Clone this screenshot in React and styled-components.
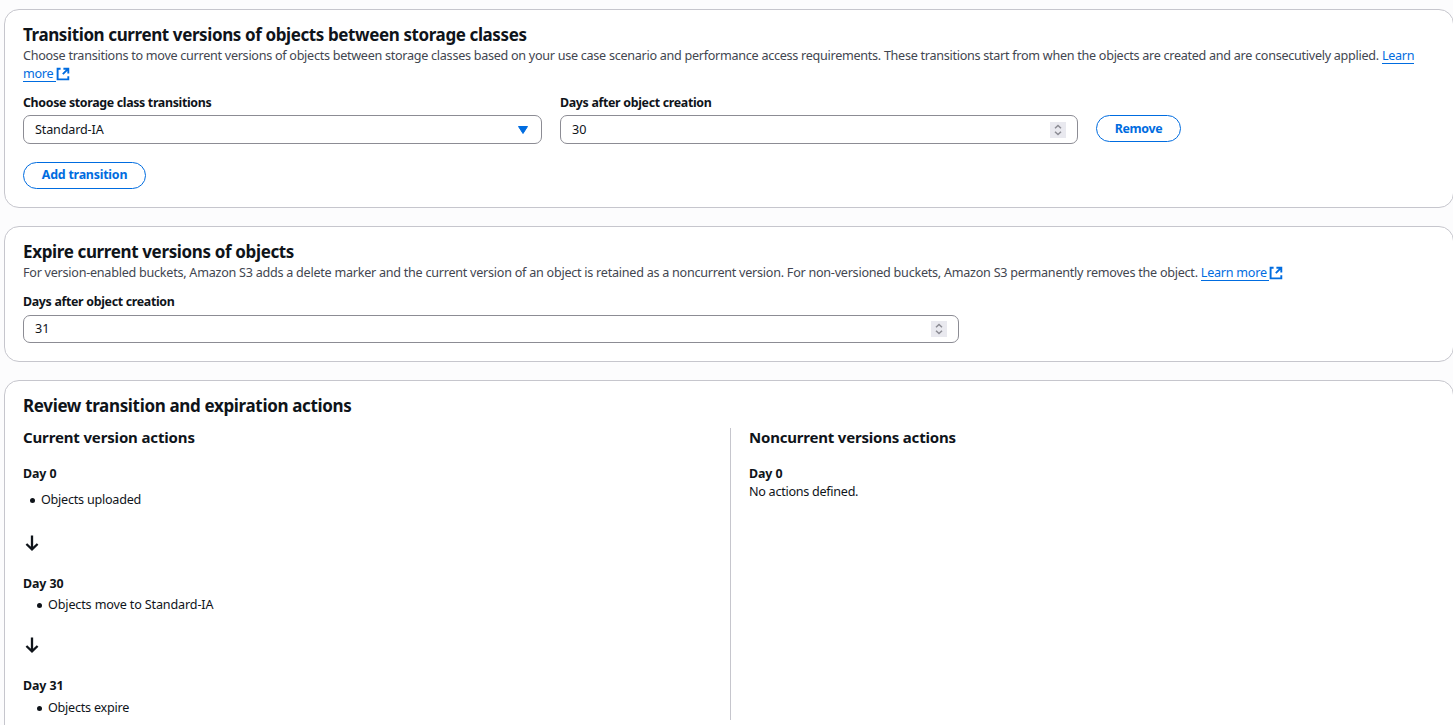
import React from "react";
import styled, { createGlobalStyle, css } from "styled-components";

const Global = createGlobalStyle`
  *, *::before, *::after { box-sizing: border-box; }
  html, body { margin: 0; background: #fcfcfd; overflow: hidden; }
  body {
    font-family: "Noto Sans", "Open Sans", sans-serif;
    font-size: 12.6px;
    line-height: 18px;
    color: #0f141a;
  }
`;

const tracking = css`
  letter-spacing: ${(p) => p.$track || 0}px;
  white-space: nowrap;
`;

const Page = styled.main`
  display: flex;
  flex-direction: column;
  gap: 18px;
  width: 1450px;
  height: 725px;
  margin-left: 4px;
  padding-top: 9px;
  overflow: hidden;
`;

const Card = styled.section`
  flex: none;
  height: ${(p) => p.$height}px;
  padding: 14px 18px 0;
  background: #fff;
  border: 1px solid #c6c6cd;
  border-radius: 15px;
`;

const Title = styled.h2`
  margin: 0;
  font-size: 17px;
  line-height: 22px;
  font-weight: 700;
  ${tracking}
`;

const Description = styled.p`
  margin: 1px 0 0;
  color: #424650;
  ${tracking}
`;

const Link = styled.a`
  color: #006ce0;
  white-space: pre;
`;

const LinkText = styled.span`
  box-shadow: inset 0 -1px 0 #006ce0;
  padding-right: ${(p) => p.$pad || 0}px;
`;

const ExternalSvg = styled.svg`
  width: 14px;
  height: 14px;
  vertical-align: -3px;
`;

const FieldRow = styled.div`
  display: flex;
  align-items: flex-start;
  gap: 18px;
  margin-top: 11px;
`;

const Field = styled.div`
  width: ${(p) => p.$width}px;
`;

const Label = styled.div`
  margin-bottom: ${(p) => p.$gap || 3}px;
  font-size: 12.4px;
  font-weight: 700;
  ${tracking}
`;

const Control = styled.div`
  display: flex;
  align-items: center;
  justify-content: space-between;
  height: ${(p) => p.$height || 29}px;
  padding: 0 11px;
  border: 1px solid #8c8c94;
  border-radius: 7px;
  background: #fff;
  ${tracking}
`;

const CaretSvg = styled.svg`
  width: 10px;
  height: 8px;
  margin-right: 2px;
`;

const Spinner = styled.span`
  display: flex;
  align-items: center;
  justify-content: center;
  width: 16px;
  height: 16px;
  background: #e9e9ef;
`;

const Button = styled.button`
  display: flex;
  align-items: center;
  justify-content: center;
  width: ${(p) => p.$width}px;
  height: 27px;
  margin: ${(p) => p.$top}px 0 0;
  padding: 0 0 ${(p) => p.$lift || 0}px;
  font: inherit;
  font-size: 12.4px;
  font-weight: 700;
  color: #006ce0;
  background: #fff;
  border: 1px solid #006ce0;
  border-radius: 14px;
  ${tracking}
`;

const Columns = styled.div`
  display: flex;
  height: 292px;
  margin-top: 11px;
`;

const Column = styled.div`
  width: ${(p) => (p.$divided ? 708 : 700)}px;
  padding-left: ${(p) => (p.$divided ? 0 : 18)}px;
  border-right: ${(p) => (p.$divided ? "1px solid #c6c6cd" : "0")};
`;

const Subtitle = styled.h3`
  margin: 0 0 18px;
  font-size: 15px;
  line-height: 19px;
  font-weight: 700;
  ${tracking}
`;

const Day = styled.div`
  font-size: 12.4px;
  font-weight: 700;
  ${tracking}
`;

const Text = styled.div`
  ${tracking}
`;

const Action = styled.div`
  display: flex;
  align-items: center;
  gap: 6px;
  height: 18px;
  margin-top: ${(p) => p.$top}px;
  padding-left: ${(p) => p.$indent}px;
  ${tracking}

  &::before {
    content: "";
    width: 5px;
    height: 5px;
    margin-top: 1px;
    border-radius: 50%;
    background: #0f141a;
  }
`;

const ArrowSvg = styled.svg`
  display: block;
  width: 18px;
  height: 18px;
  margin: ${(p) => p.$margin};
`;

function External() {
  return (
    <ExternalSvg viewBox="0 0 14 14" fill="none" stroke="#006ce0" strokeWidth="1.9">
      <path d="M4.6 1.7H1.6v10.7h10.7V9.2" />
      <path d="M7.4 1.7h4.9v4.8M12.3 1.7 6.8 7.2" />
    </ExternalSvg>
  );
}

function Stepper() {
  return (
    <Spinner>
      <svg width="16" height="16" viewBox="0 0 16 16" fill="none" stroke="#8c8c94" strokeWidth="1.5">
        <path d="M5 6.3 8 3.5l3 2.8M5 9.7l3 2.8 3-2.8" />
      </svg>
    </Spinner>
  );
}

function Arrow({ margin }) {
  return (
    <ArrowSvg $margin={margin} viewBox="0 0 18 18" fill="none" stroke="#0f141a" strokeWidth="2.3">
      <path d="M9 .5v14M3.4 9 9 14.4 14.6 9" />
    </ArrowSvg>
  );
}

export default function App() {
  return (
    <>
      <Global />
      <Page>
        <Card $height={199}>
          <Title $track={-0.394}>Transition current versions of objects between storage classes</Title>
          <Description $track={-0.28}>
            Choose transitions to move current versions of objects between storage classes based on your use case
            scenario and performance access requirements. These transitions start from when the objects are created and
            are consecutively applied.{" "}
            <Link>
              <LinkText>Learn</LinkText>
              <br />
              <LinkText $pad={3}>more</LinkText>
              <External />
            </Link>
          </Description>
          <FieldRow>
            <Field $width={519}>
              <Label $track={-0.34}>Choose storage class transitions</Label>
              <Control $track={-0.15}>
                Standard-IA
                <CaretSvg viewBox="0 0 10 8">
                  <path d="M.5.5h9L5 7.5z" fill="#006ce0" stroke="#006ce0" strokeLinejoin="round" />
                </CaretSvg>
              </Control>
            </Field>
            <Field $width={518}>
              <Label $track={-0.32}>Days after object creation</Label>
              <Control>
                30
                <Stepper />
              </Control>
            </Field>
            <Button $width={85} $top={21} $track={-0.35}>
              Remove
            </Button>
          </FieldRow>
          <Button $width={123} $top={18} $lift={1} $track={-0.21}>
            Add transition
          </Button>
        </Card>

        <Card $height={136}>
          <Title $track={-0.36}>Expire current versions of objects</Title>
          <Description $track={-0.256}>
            For version-enabled buckets, Amazon S3 adds a delete marker and the current version of an object is retained
            as a noncurrent version. For non-versioned buckets, Amazon S3 permanently removes the object.{" "}
            <Link>
              <LinkText $pad={2}>Learn more</LinkText>
              <External />
            </Link>
          </Description>
          <FieldRow>
            <Field $width={936}>
              <Label $gap={4} $track={-0.32}>Days after object creation</Label>
              <Control $height={28}>
                31
                <Stepper />
              </Control>
            </Field>
          </FieldRow>
        </Card>

        <Card $height={380}>
          <Title $track={-0.34}>Review transition and expiration actions</Title>
          <Columns>
            <Column $divided>
              <Subtitle $track={-0.15}>Current version actions</Subtitle>
              <Day $track={-0.07}>Day 0</Day>
              <Action $top={8} $indent={7} $track={-0.24}>Objects uploaded</Action>
              <Arrow margin="26px 0 22px" />
              <Day $track={-0.07}>Day 30</Day>
              <Action $top={3} $indent={14} $track={-0.15}>Objects move to Standard-IA</Action>
              <Arrow margin="23px 0 22px" />
              <Day $track={-0.07}>Day 31</Day>
              <Action $top={4} $indent={14} $track={-0.24}>Objects expire</Action>
            </Column>
            <Column>
              <Subtitle $track={-0.2}>Noncurrent versions actions</Subtitle>
              <Day $track={-0.07}>Day 0</Day>
              <Text $track={-0.28}>No actions defined.</Text>
            </Column>
          </Columns>
        </Card>
      </Page>
    </>
  );
}
